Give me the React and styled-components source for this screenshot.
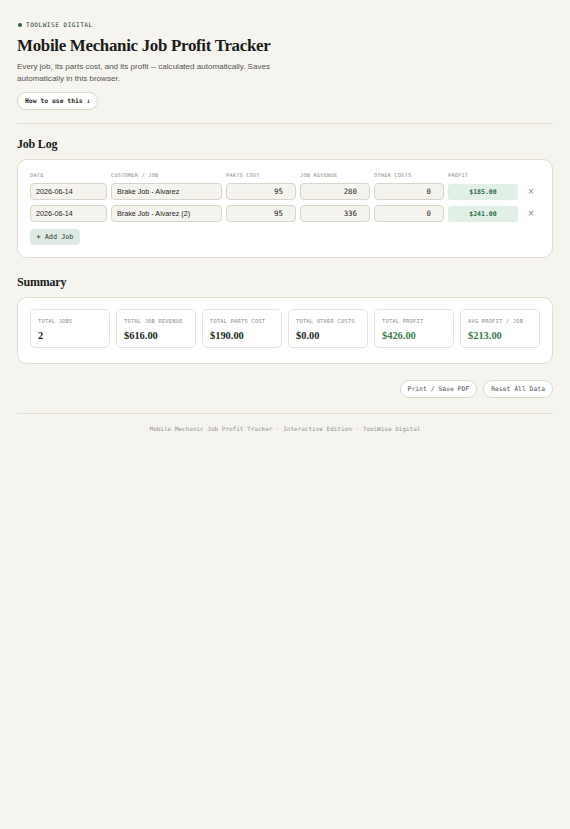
import React, { useState } from "react";
import styled, { createGlobalStyle } from "styled-components";

const GlobalStyle = createGlobalStyle`
  html, body {
    margin: 0;
    padding: 0;
    background: #f5f4ef;
  }
  * { box-sizing: border-box; }
`;

const mono = `"DejaVu Sans Mono", "Liberation Mono", monospace`;
const serif = `"Liberation Serif", "Times New Roman", serif`;
const sans = `"Liberation Sans", Arial, sans-serif`;

const initialJobs = [
  { id: 1, date: "2026-06-14", customer: "Brake Job - Alvarez", parts: 95, revenue: 280, other: 0 },
  { id: 2, date: "2026-06-14", customer: "Brake Job - Alvarez (2)", parts: 95, revenue: 336, other: 0 },
];

const money = (n) => "$" + n.toFixed(2);

const App = () => {
  const [jobs, setJobs] = useState(initialJobs);

  const update = (id, key, value) => {
    setJobs(jobs.map((j) => (j.id === id ? { ...j, [key]: value } : j)));
  };

  const addJob = () => {
    setJobs([...jobs, { id: Date.now(), date: "", customer: "", parts: 0, revenue: 0, other: 0 }]);
  };

  const removeJob = (id) => setJobs(jobs.filter((j) => j.id !== id));

  const num = (v) => Number(v) || 0;
  const totalRevenue = jobs.reduce((s, j) => s + num(j.revenue), 0);
  const totalParts = jobs.reduce((s, j) => s + num(j.parts), 0);
  const totalOther = jobs.reduce((s, j) => s + num(j.other), 0);
  const totalProfit = totalRevenue - totalParts - totalOther;
  const avgProfit = jobs.length ? totalProfit / jobs.length : 0;

  const stats = [
    { label: "Total Jobs", value: String(jobs.length) },
    { label: "Total Job Revenue", value: money(totalRevenue) },
    { label: "Total Parts Cost", value: money(totalParts) },
    { label: "Total Other Costs", value: money(totalOther) },
    { label: "Total Profit", value: money(totalProfit), green: true },
    { label: "Avg Profit / Job", value: money(avgProfit), green: true },
  ];

  return (
    <Page>
      <GlobalStyle />
      <Brand>
        <Dot />
        TOOLWISE DIGITAL
      </Brand>
      <Title>Mobile Mechanic Job Profit Tracker</Title>
      <Subtitle>
        Every job, its parts cost, and its profit -- calculated automatically. Saves
        automatically in this browser.
      </Subtitle>
      <PillButton $bold>How to use this ↓</PillButton>

      <Divider />

      <SectionTitle>Job Log</SectionTitle>
      <Card>
        <Grid>
          <HeadLabel>Date</HeadLabel>
          <HeadLabel>Customer / Job</HeadLabel>
          <HeadLabel>Parts Cost</HeadLabel>
          <HeadLabel>Job Revenue</HeadLabel>
          <HeadLabel>Other Costs</HeadLabel>
          <HeadLabel>Profit</HeadLabel>
          <span />
          {jobs.map((j) => {
            const profit = num(j.revenue) - num(j.parts) - num(j.other);
            return (
              <React.Fragment key={j.id}>
                <Field value={j.date} onChange={(e) => update(j.id, "date", e.target.value)} />
                <Field value={j.customer} onChange={(e) => update(j.id, "customer", e.target.value)} />
                <NumField value={j.parts} onChange={(e) => update(j.id, "parts", e.target.value)} />
                <NumField value={j.revenue} onChange={(e) => update(j.id, "revenue", e.target.value)} />
                <NumField value={j.other} onChange={(e) => update(j.id, "other", e.target.value)} />
                <Profit>{money(profit)}</Profit>
                <RemoveButton onClick={() => removeJob(j.id)}>×</RemoveButton>
              </React.Fragment>
            );
          })}
        </Grid>
        <AddButton onClick={addJob}>+ Add Job</AddButton>
      </Card>

      <SectionTitle $top={16}>Summary</SectionTitle>
      <Card $bottom={15}>
        <StatGrid>
          {stats.map((s) => (
            <Stat key={s.label}>
              <StatLabel>{s.label}</StatLabel>
              <StatValue $green={s.green}>{s.value}</StatValue>
            </Stat>
          ))}
        </StatGrid>
      </Card>

      <Actions>
        <PillButton onClick={() => window.print()}>Print / Save PDF</PillButton>
        <PillButton onClick={() => setJobs([])}>Reset All Data</PillButton>
      </Actions>

      <Divider $top={15} />
      <Footer>Mobile Mechanic Job Profit Tracker · Interactive Edition · ToolWise Digital</Footer>
    </Page>
  );
};

export default App;

const Page = styled.div`
  width: 570px;
  padding: 21px 17px 40px;
  display: flex;
  flex-direction: column;
  align-items: stretch;
`;

const Brand = styled.div`
  display: flex;
  align-items: center;
  gap: 4px;
  font-family: ${mono};
  font-size: 6.1px;
  letter-spacing: 0.5px;
  line-height: 8px;
  color: #2b3a31;
`;

const Dot = styled.span`
  width: 4px;
  height: 4px;
  border-radius: 50%;
  background: #2f5d42;
  margin-left: 1px;
`;

const Title = styled.h1`
  margin: 7px 0 0;
  font-family: ${serif};
  font-weight: 700;
  font-size: 16.9px;
  letter-spacing: -0.3px;
  line-height: 20px;
  color: #1b1c1a;
`;

const Subtitle = styled.p`
  margin: 5px 0 0;
  max-width: 262px;
  font-family: ${sans};
  font-size: 8.05px;
  line-height: 11.5px;
  color: #55554f;
`;

const PillButton = styled.button`
  align-self: flex-start;
  height: 18px;
  padding: 0 7px;
  margin-top: 8px;
  border-radius: 9px;
  border: 1px solid #dcd8cb;
  background: #ffffff;
  font-family: ${mono};
  font-size: 6.4px;
  font-weight: ${(p) => (p.$bold ? 700 : 400)};
  color: ${(p) => (p.$bold ? "#1f2a24" : "#55554f")};
  cursor: pointer;
`;

const Divider = styled.hr`
  margin: ${(p) => p.$top || 13}px 0 0;
  border: none;
  border-top: 1px solid #e2dfd5;
  width: 100%;
`;

const SectionTitle = styled.h2`
  margin: ${(p) => p.$top || 12}px 0 0;
  font-family: ${serif};
  font-weight: 700;
  font-size: 12px;
  letter-spacing: -0.2px;
  line-height: 16px;
  color: #1b1c1a;
`;

const Card = styled.section`
  margin-top: 7px;
  background: #ffffff;
  border: 1.5px solid #e1ddd0;
  border-radius: 10px;
  padding: 11px 12px ${(p) => p.$bottom || 12}px;
`;

const Grid = styled.div`
  display: grid;
  grid-template-columns: 77px 111px 70px 70px 70px 70px 1fr;
  column-gap: 4px;
  row-gap: 5px;
  align-items: center;
`;

const HeadLabel = styled.div`
  font-family: ${mono};
  font-size: 5.3px;
  line-height: 8px;
  text-transform: uppercase;
  letter-spacing: 0.2px;
  color: #8d8c86;
  margin-bottom: -1px;
`;

const Field = styled.input`
  height: 17px;
  width: 100%;
  padding: 0 5px;
  border: 1px solid #d9d5c9;
  border-radius: 4px;
  background: #f5f3ee;
  font-family: ${sans};
  font-size: 7.2px;
  color: #1e1f1c;
  outline: none;
`;

const NumField = styled(Field)`
  text-align: right;
  padding-right: 12px;
  font-family: ${mono};
  font-size: 7.4px;
`;

const Profit = styled.div`
  height: 16px;
  display: flex;
  align-items: center;
  justify-content: center;
  border-radius: 3px;
  background: #e1efe6;
  font-family: ${mono};
  font-size: 6.5px;
  font-weight: 700;
  color: #2e6a47;
`;

const RemoveButton = styled.button`
  justify-self: center;
  border: none;
  background: transparent;
  padding: 0;
  font-family: ${sans};
  font-size: 10px;
  line-height: 10px;
  color: #8a8984;
  cursor: pointer;
`;

const AddButton = styled.button`
  margin-top: 7px;
  height: 16px;
  width: 50px;
  border: none;
  border-radius: 4px;
  background: #dfe9e3;
  font-family: ${mono};
  font-size: 6.8px;
  color: #2b3a31;
  cursor: pointer;
`;

const StatGrid = styled.div`
  display: grid;
  grid-template-columns: repeat(6, 80px);
  column-gap: 6px;
`;

const Stat = styled.div`
  height: 39px;
  padding: 7px 7px 0;
  border: 1px solid #e6e3da;
  border-radius: 5px;
  background: #ffffff;
`;

const StatLabel = styled.div`
  font-family: ${mono};
  font-size: 5.4px;
  line-height: 8px;
  letter-spacing: 0.2px;
  text-transform: uppercase;
  color: #8d8c86;
`;

const StatValue = styled.div`
  margin-top: 4px;
  font-family: ${serif};
  font-weight: 700;
  font-size: 10.4px;
  line-height: 13px;
  color: ${(p) => (p.$green ? "#3b7a52" : "#1b2a22")};
`;

const Actions = styled.div`
  margin-top: 8px;
  display: flex;
  justify-content: flex-end;
  gap: 6px;
`;

const Footer = styled.div`
  margin-top: 10px;
  text-align: center;
  font-family: ${mono};
  font-size: 6px;
  line-height: 10px;
  color: #96958f;
`;
